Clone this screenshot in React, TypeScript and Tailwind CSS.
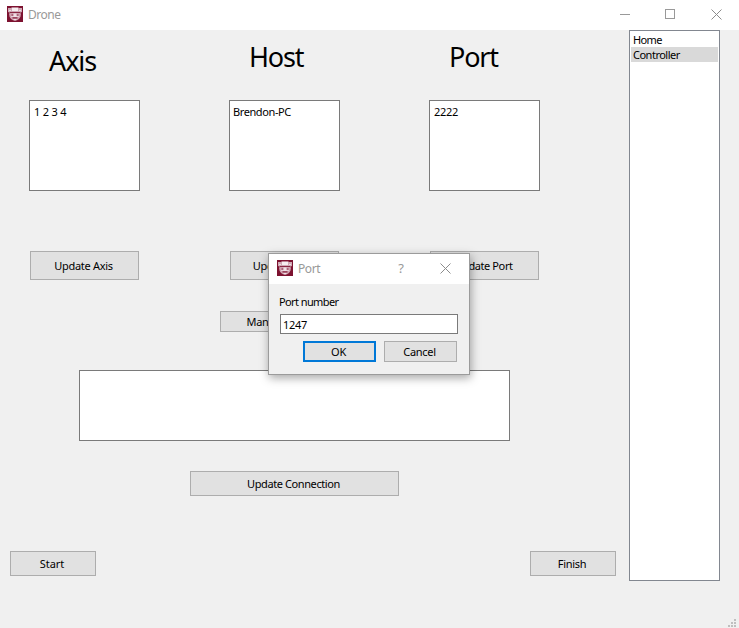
import type { ReactNode } from 'react';

const small = 'text-[11px] leading-[14px] whitespace-pre text-black';

function Label({ children, className = '' }: { children: ReactNode; className?: string }) {
  return <span className={`block ${small} ${className}`}>{children}</span>;
}

function Button({ children, className = '' }: { children: ReactNode; className?: string }) {
  return (
    <button
      className={`flex items-center justify-center border border-[#adadad] bg-[#e1e1e1] pr-[2px] ${small} ${className}`}
    >
      {children}
    </button>
  );
}

function Crest() {
  return (
    <svg width="16" height="16" viewBox="0 0 16 16" className="shrink-0">
      <rect width="16" height="16" fill="#7d1230" />
      <path d="M1 2h3l1-.8h6l1 .8h3v4l-2 .8H3L1 6Z" fill="#cfa9b5" />
      <path d="M5 2h6v3H5z" fill="#f6edf0" />
      <path d="M2 4h2v1H2zM12 4h2v1h-2z" fill="#eddde2" />
      <path d="M2 7.500l2-.7h8l2 .7-.5 3C12.800 12.800 11 14.200 8 15 5 14.200 3.200 12.800 2.500 10.500Z" fill="#cfa3b0" />
      <path d="M3 6h10v1H3zM4.500 8.500h2v1h-2zM9.500 8.500h2v1h-2zM5 12l1-.8h4l1 .8-1 .6H6Z" fill="#8a2743" />
      <path d="M6.500 7.500h3v2.700h-3zM4 10.200h8v.8H4zM6.500 13h3v1h-3z" fill="#f0e0e5" />
    </svg>
  );
}

function Cross() {
  return (
    <svg width="11" height="11" viewBox="0 0 11 11" className="block">
      <path d="M.5.5l10 10M10.500.5l-10 10" stroke="#8c8c8c" strokeWidth="1" fill="none" />
    </svg>
  );
}

function TitleBar() {
  return (
    <header className="flex h-[30px] shrink-0 items-start bg-white pl-[7px] text-[#999999]">
      <div className="pt-[6px]"><Crest /></div>
      <span className="ml-[5px] mt-[7px] text-[12px] leading-[16px] tracking-[-0.5px]">Drone</span>
      <div className="ml-auto flex pr-[17px] pt-[9px]">
        <div className="mr-[35px] mt-[5px] h-px w-[10px] bg-[#999999]" />
        <div className="mr-[36px] h-[10px] w-[10px] border border-[#999999]" />
        <Cross />
      </div>
    </header>
  );
}

function Field({ title, value, action, className, titleClass, valueClass, actionClass }: {
  title: string; value: string; action: string;
  className: string; titleClass: string; valueClass: string; actionClass: string;
}) {
  return (
    <section className={`flex w-[111px] flex-col ${className}`}>
      <div className="h-[70px]">
        <h1 className={`text-[27px] leading-[36px] text-black ${titleClass}`}>{title}</h1>
      </div>
      <div className="h-[91px] border border-[#7a7a7a] bg-white pt-[4px]">
        <Label className={valueClass}>{value}</Label>
      </div>
      <Button className={`mx-px mt-[60px] h-[29px] ${actionClass}`}>{action}</Button>
    </section>
  );
}

function PortDialog() {
  return (
    <div className="absolute left-[268px] top-[253px] h-[122px] w-[202px] border border-[#9b9b9b] bg-[#f0f0f0] shadow-[1px_3px_9px_rgba(0,0,0,0.35)]">
      <div className="flex h-[30px] items-start bg-white pl-[8px] text-[#999999]">
        <div className="pt-[6px]"><Crest /></div>
        <span className="ml-[5px] mt-[7px] text-[12px] leading-[16px] tracking-[-0.4px]">Port</span>
        <span className="ml-auto mt-[6px] text-[13px] leading-[16px]">?</span>
        <div className="ml-[36px] mr-[18px] mt-[9px]"><Cross /></div>
      </div>
      <div className="px-[10px] pt-[11px]">
        <Label className="tracking-[-0.6px]">Port number</Label>
        <div className="ml-px mt-[5px] h-[20px] w-[178px] border border-[#7a7a7a] bg-white pl-[2px] pt-[3px]">
          <Label className="tracking-[-0.3px]">1247</Label>
        </div>
        <div className="mt-[7px] flex justify-end pr-[2px]">
          <Button className="mr-[8px] h-[21px] w-[73px] border-2 !border-[#0078d7] tracking-[-0.3px]">OK</Button>
          <Button className="h-[21px] w-[73px] tracking-[-0.3px]">Cancel</Button>
        </div>
      </div>
    </div>
  );
}

export default function App() {
  return (
    <div className="relative flex h-[628px] w-[739px] flex-col overflow-hidden bg-[#f0f0f0] font-['Noto_Sans',sans-serif]">
      <TitleBar />
      <div className="flex flex-1">
        <main className="flex w-[629px] flex-col">
          <div className="flex pl-[29px]">
            <Field title="Axis" value="1 2 3 4" action="Update Axis" className="mr-[89px]" titleClass="mt-[13px] pl-[20px] tracking-[-1.1px]" valueClass="pl-[4px] tracking-[-0.2px]" actionClass="tracking-[-0.3px]" />
            <Field title="Host" value="Brendon-PC" action="Update Host" className="mr-[89px]" titleClass="mt-[9px] pl-[20px] tracking-[-1.2px]" valueClass="pl-[3px] tracking-[-0.4px]" actionClass="tracking-[-0.3px]" />
            <Field title="Port" value="2222" action="Update Port" className="" titleClass="mt-[9px] pl-[20px] tracking-[-1.2px]" valueClass="pl-[4px] tracking-[-0.3px]" actionClass="tracking-[-0.4px]" />
          </div>
          <Button className="ml-[220px] mt-[31px] h-[21px] w-[149px] tracking-[-0.4px]">Manual Connection</Button>
          <div className="ml-[79px] mt-[38px] h-[71px] w-[431px] border border-[#7a7a7a] bg-white" />
          <Button className="ml-[190px] mt-[30px] h-[25px] w-[209px] tracking-[-0.4px]">Update Connection</Button>
          <div className="mt-[55px] flex justify-between pl-[10px] pr-[13px]">
            <Button className="h-[25px] w-[86px]">Start</Button>
            <Button className="h-[25px] w-[86px] tracking-[-0.3px]">Finish</Button>
          </div>
        </main>
        <aside className="h-[551px] w-[91px] border border-[#828790] bg-white px-px pt-[2px]">
          <Label className="h-[14px] pl-[2px] tracking-[-0.6px]">Home</Label>
          <Label className="h-[15px] bg-[#d9d9d9] pl-[2px] pt-px tracking-[-0.5px]">Controller</Label>
        </aside>
        <svg width="8" height="8" viewBox="0 0 8 8" className="mb-px ml-[8px] self-end" fill="#bfbfbf">
          <path d="M6 0h2v2H6zM3 3h2v2H3zM6 3h2v2H6zM0 6h2v2H0zM3 6h2v2H3zM6 6h2v2H6z" />
        </svg>
      </div>
      <PortDialog />
    </div>
  );
}
